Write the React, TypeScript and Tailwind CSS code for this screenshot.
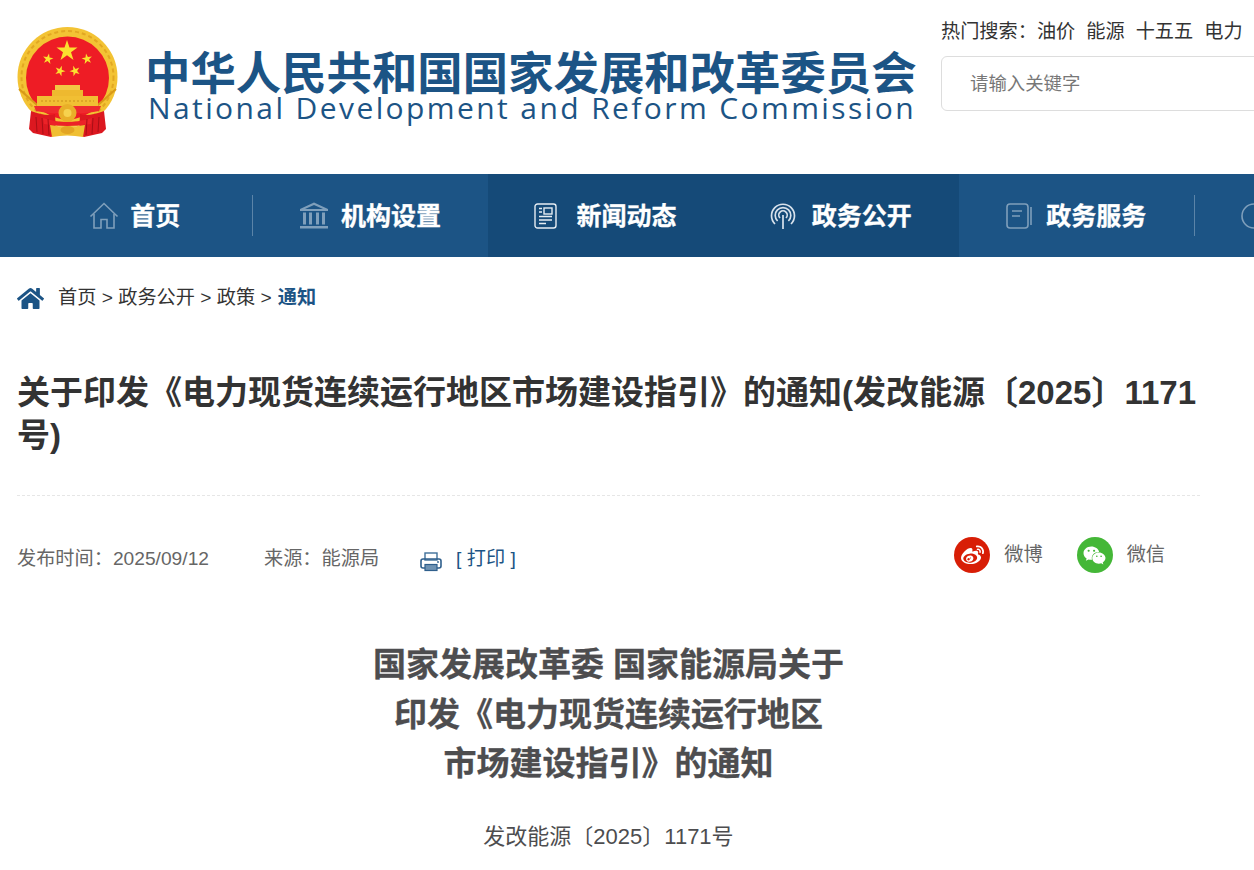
import React from 'react';
import { FaHome, FaWeibo, FaWeixin } from 'react-icons/fa';

const cjk = { fontFamily: '"Liberation Sans", "Noto Sans CJK SC", sans-serif' };

const star = (cx: number, cy: number, r: number, rot = 0) => {
  const pts: string[] = [];
  for (let i = 0; i < 10; i++) {
    const rad = i % 2 === 0 ? r : r * 0.38;
    const a = ((-90 + i * 36 + rot) * Math.PI) / 180;
    pts.push(`${(cx + rad * Math.cos(a)).toFixed(1)},${(cy + rad * Math.sin(a)).toFixed(1)}`);
  }
  return pts.join(' ');
};

const Emblem = () => (
  <svg width="102" height="112" viewBox="0 0 102 112" className="shrink-0">
    <circle cx="50.5" cy="50" r="50" fill="#f3c334" />
    <circle cx="50.5" cy="50" r="46" fill="none" stroke="#e2a722" strokeWidth="2" strokeDasharray="4 3" />
    <circle cx="50.5" cy="51" r="41.5" fill="#ee1c25" />
    <path d="M2 62 L20 78 M99 62 L81 78" stroke="#d99a18" strokeWidth="2" />
    <polygon points={star(50, 24, 11)} fill="#fbe02f" />
    <polygon points={star(31, 32, 5.5, 10)} fill="#fbe02f" />
    <polygon points={star(70, 32, 5.5, -10)} fill="#fbe02f" />
    <polygon points={star(43, 44, 5.5, 20)} fill="#fbe02f" />
    <polygon points={star(58, 44, 5.5, -20)} fill="#fbe02f" />
    {/* gate */}
    <rect x="38" y="58" width="25" height="5" fill="#f3c744" />
    <rect x="35" y="63" width="31" height="6" fill="#eeb92f" />
    <rect x="20" y="69" width="61" height="10" fill="#f1bf33" />
    <path d="M24 74 H77" stroke="#c98f1a" strokeWidth="1" strokeDasharray="2 2" />
    {/* ribbon */}
    <path d="M17 79 H84 L82 84 Q66 87 60 86 L41 86 Q35 87 19 84 Z" fill="#ee2a2e" />
    <circle cx="50.5" cy="86" r="9" fill="#e9af28" />
    <circle cx="50.5" cy="86" r="4" fill="#f6d24e" />
    <path d="M14 84 Q30 90 38 87 L39 108 L34 110 L16 106 L12 102 Z" fill="#dc1820" />
    <path d="M87 84 Q71 90 63 87 L62 108 L67 110 L85 106 L89 102 Z" fill="#dc1820" />
    <path d="M26 91 Q50 99 75 91 L74 97 Q50 101 27 97 Z" fill="#ec2228" />
    <path d="M33 98 Q50 101 68 98 L66 110 Q50 107 35 110 Z" fill="#f0bf33" />
    <path d="M19 90 L20 105 M25 91 L26 107 M31 92 L32 108 M82 90 L81 105 M76 91 L75 107 M70 92 L69 108" stroke="#a90f16" strokeWidth="1" />
    <ellipse cx="50.5" cy="103" rx="7" ry="4" fill="#e3a524" />
  </svg>
);

const HomeIcon = () => (
  <svg width="30" height="28" viewBox="0 0 30 28" fill="none" stroke="#7f9fbb" strokeWidth="1.6">
    <path d="M1.5 14.5 L15 1.5 L28.5 14.5" />
    <path d="M5 12 V26 H12 V17.5 H18 V26 H25 V12" />
  </svg>
);

const BankIcon = () => (
  <svg width="30" height="27" viewBox="0 0 30 27" fill="#7f9fbb">
    <path d="M15 0.5 L29 7 V9 H1 V7 Z M15 3 L6 7 H24 Z" fillRule="evenodd" />
    <rect x="4" y="10.5" width="3" height="12" />
    <rect x="10" y="10.5" width="3" height="12" />
    <rect x="17" y="10.5" width="3" height="12" />
    <rect x="23" y="10.5" width="3" height="12" />
    <rect x="1" y="24" width="28" height="2.5" />
  </svg>
);

const NewsIcon = () => (
  <svg width="23" height="26" viewBox="0 0 23 26" fill="none" stroke="#e6edf3" strokeWidth="1.4">
    <rect x="1" y="1" width="21" height="24" rx="2.5" />
    <rect x="10" y="5" width="8" height="6" />
    <path d="M5 5.5 H8 M5 9 H8 M5 13.5 H18 M5 17 H18 M5 20.5 H12" />
  </svg>
);

const SignalIcon = () => (
  <svg width="26" height="26" viewBox="0 0 26 26" fill="none" stroke="#d8e2ec" strokeWidth="1.7">
    <path d="M5 21 A11.5 11.5 0 1 1 21 21" />
    <path d="M7.6 18 A7.8 7.8 0 1 1 18.4 18" />
    <path d="M10 15 A4.2 4.2 0 1 1 16 15" />
    <path d="M13 12 V26" />
  </svg>
);

const BookIcon = () => (
  <svg width="26" height="26" viewBox="0 0 26 26" fill="none" stroke="#7f9fbb" strokeWidth="1.6">
    <rect x="1" y="1" width="21" height="24" rx="3" />
    <path d="M6 8 H16 M6 13 H14" />
    <path d="M25 4 V22" />
  </svg>
);

const CircleIcon = () => (
  <svg width="26" height="26" viewBox="0 0 26 26" fill="none" stroke="#7f9fbb" strokeWidth="1.6">
    <circle cx="13" cy="13" r="12" />
  </svg>
);

const PrinterIcon = () => (
  <svg width="22" height="20" viewBox="0 0 22 20" fill="none" className="shrink-0">
    <rect x="5" y="1" width="12" height="7" stroke="#3f6f99" strokeWidth="1.4" />
    <rect x="1" y="7" width="20" height="9" rx="2" stroke="#2f5f8c" strokeWidth="1.6" />
    <rect x="5" y="12.5" width="12" height="6" fill="#6f93b3" stroke="#2f5f8c" strokeWidth="1.2" />
    <circle cx="18" cy="10" r="0.9" fill="#2f5f8c" />
  </svg>
);

const navItems = [
  { label: '首页', icon: <HomeIcon />, active: false, gap: 'gap-[11px]' },
  { label: '机构设置', icon: <BankIcon />, active: false, gap: 'gap-[12px]' },
  { label: '新闻动态', icon: <NewsIcon />, active: true, gap: 'gap-[19px]' },
  { label: '政务公开', icon: <SignalIcon />, active: true, gap: 'gap-[16px]' },
  { label: '政务服务', icon: <BookIcon />, active: false, gap: 'gap-[14px]' },
];

export default function App() {
  return (
    <div className="w-[1254px] h-[870px] overflow-hidden bg-white" style={cjk}>
      {/* Header */}
      <div className="h-[174px] flex pl-[17px]">
        <div className="pt-[27px]">
          <Emblem />
        </div>
        <div className="ml-[26px] w-[796px] shrink-0 pt-[43px] text-[#1c5485]">
          <div className="h-[50px] text-[45.4px] leading-[54px] font-bold whitespace-nowrap" style={{ fontFamily: '"Noto Sans CJK SC", sans-serif' }}>
            中华人民共和国国家发展和改革委员会
          </div>
          <div className="text-[30px] leading-[30px] ml-[3px] tracking-[2.4px] whitespace-nowrap" style={{ fontFamily: '"Open Sans", sans-serif' }}>
            National Development and Reform Commission
          </div>
        </div>
        <div className="w-[400px] shrink-0 pt-[20px]">
          <div className="text-[19.2px] leading-[24px] text-[#333] whitespace-nowrap flex gap-[11px]">
            <span className="-mr-[11px]">热门搜索：</span>
            <span>油价</span>
            <span>能源</span>
            <span>十五五</span>
            <span>电力</span>
          </div>
          <div className="mt-[12px] h-[55px] border border-[#ddd] rounded-[6px] flex items-center pl-[28px] text-[18.4px] text-[#777]">
            请输入关键字
          </div>
        </div>
      </div>

      {/* Nav */}
      <div className="h-[83px] bg-[#1c5485] flex pl-[17px] text-white">
        {navItems.map((item) => (
          <div
            key={item.label}
            className={`relative w-[235.4px] shrink-0 flex items-center justify-center ${item.gap} ${item.active ? 'bg-[#154a78]' : ''}`}
          >
            {item.icon}
            <span className="text-[25px] leading-[36px] -mt-[4px] font-bold whitespace-nowrap [-webkit-text-stroke:0.3px_white]" style={{ fontFamily: '"Noto Sans CJK SC", sans-serif' }}>{item.label}</span>
            {!item.active && <span className="absolute -right-px top-[21px] h-[41px] w-px bg-[#5b84a8]" />}
          </div>
        ))}
        {/* next item is cut off by the window, only its icon shows */}
        <div className="shrink-0 flex items-center pl-[47px]">
          <CircleIcon />
        </div>
      </div>

      {/* Breadcrumb */}
      <div className="pl-[17px] w-[1200px]">
        <div className="h-[26px] mt-[28px] flex items-center text-[19.2px] text-[#333] whitespace-nowrap">
          <FaHome className="text-[#1c5485] text-[27px] mr-[14px]" />
          <span>首页 &gt; 政务公开 &gt; 政策 &gt;</span>
          <span className="font-bold text-[#1c5485] ml-[6px]">通知</span>
        </div>

        {/* Title */}
        <h1 className="mt-[60px] text-[33px] leading-[43px] font-bold text-[#333]">
          关于印发《电力现货连续运行地区市场建设指引》的通知(发改能源〔2025〕1171号)
        </h1>
        <div className="mt-[38px] border-t border-dashed border-[#e6e6e6]" />

        {/* Meta */}
        <div className="mt-[41px] flex items-start text-[19.2px] leading-[28px] text-[#666] whitespace-nowrap">
          <span className="mt-[8px]">发布时间：2025/09/12</span>
          <span className="ml-[55px] mt-[8px]">来源：能源局</span>
          <span className="ml-[41px] mt-[15px]"><PrinterIcon /></span>
          <span className="ml-[14px] mt-[8px] text-[#1c5485]">[ 打印 ]</span>
          <div className="ml-auto mr-[35px] flex items-center">
            <span className="ml-px w-[36px] h-[36px] rounded-full bg-[#d81e06] flex items-center justify-center text-white text-[23px]"><FaWeibo /></span>
            <span className="ml-[14px]">微博</span>
            <span className="ml-[34px] w-[36px] h-[36px] rounded-full bg-[#44b737] flex items-center justify-center text-white text-[23px]"><FaWeixin /></span>
            <span className="ml-[14px]">微信</span>
          </div>
        </div>

        {/* Article */}
        <div className="mt-[67px] text-center text-[33px] leading-[49.5px] font-bold text-[#4d4d4f] [-webkit-text-stroke:0.3px_#4d4d4f]">
          <div>国家发展改革委 国家能源局关于</div>
          <div>印发《电力现货连续运行地区</div>
          <div>市场建设指引》的通知</div>
        </div>
        <div className="mt-[32px] text-center text-[22px] leading-[32px] text-[#4d4d4f]">
          发改能源〔2025〕1171号
        </div>
      </div>
    </div>
  );
}
